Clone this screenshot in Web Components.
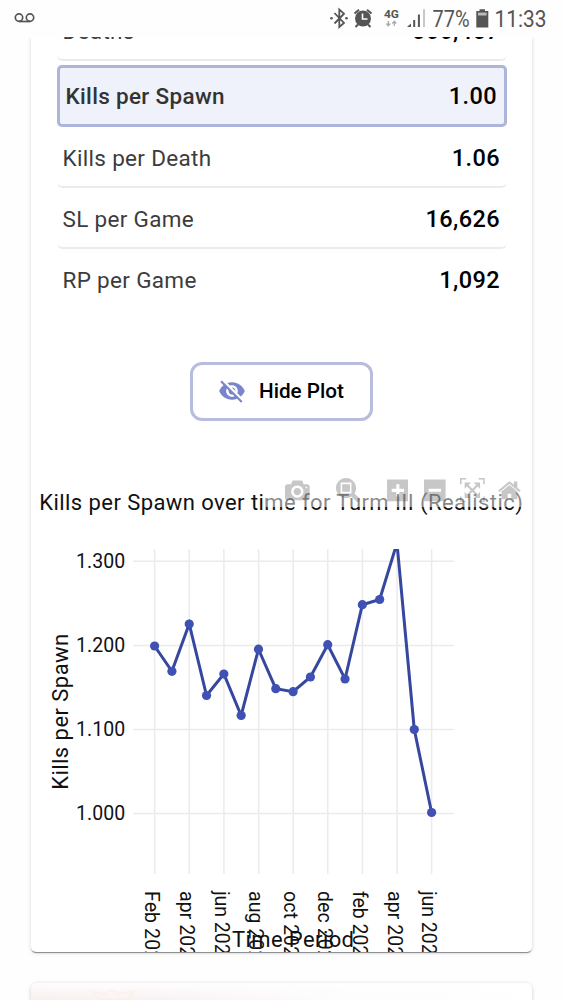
<!DOCTYPE html>
<html lang="en"><head><meta charset="utf-8"><title>Turm III statistics</title>
<style>
body{margin:0;width:562px;height:1000px;overflow:hidden;background:#fefefe;font-family:Roboto,"Liberation Sans",sans-serif}
</style></head><body>
<stats-app></stats-app>
<script>
const define=(name,html,init)=>customElements.define(name,class extends HTMLElement{
  constructor(){super();this.attachShadow({mode:'open'}).innerHTML=html;}
  connectedCallback(){if(init)init(this,this.shadowRoot);}
});

define('status-bar',`<style>:host{display:block;height:37px;background:#fefefe;position:relative;z-index:2}svg{display:block}text{font-family:Roboto,sans-serif;fill:#555}</style>
<svg width="562" height="37" viewBox="0 0 562 37">
<g fill="none" stroke="#555" stroke-width="1.7"><circle cx="19" cy="17.6" r="3.7"/><circle cx="30" cy="17.6" r="3.7"/><path d="M19 21.5H30"/></g>
<path d="M334.500 13L344 23L339.300 27V9.500L344 13.700L334.500 23.500" fill="none" stroke="#555" stroke-width="1.800"/>
<circle cx="331.500" cy="18.300" r="1.300" fill="#555"/><circle cx="346.500" cy="18.300" r="1.300" fill="#555"/>
<circle cx="363" cy="18.500" r="8" fill="#555"/>
<path d="M354.500 13.500L359 9.700M371.500 13.500L367 9.700M358 24.500L355.500 27M368 24.500L370.500 27" stroke="#555" stroke-width="2"/>
<path d="M362.500 13.500V19H367.500" fill="none" stroke="#fefefe" stroke-width="1.600"/>
<text x="384" y="18" font-size="11.500" font-weight="700" textLength="15" lengthAdjust="spacingAndGlyphs">4G</text>
<path d="M388.300 21V25M386.300 23.500L388.300 25.700L390.300 23.500M394.300 26V22M392.300 23.500L394.300 21.300L396.300 23.500" fill="none" stroke="#aaa" stroke-width="1.300"/>
<path d="M407 27L411 23.500V27Z" fill="#555"/><path d="M414.200 27V20M418.900 27V14.500" stroke="#555" stroke-width="2"/><path d="M424 27V9.300" stroke="#c8c8c8" stroke-width="2"/>
<text x="432.500" y="27" font-size="23" textLength="37" lengthAdjust="spacingAndGlyphs">77%</text>
<path d="M479.500 9.300H485V11H488.300V27.500H476.300V11H479.500Z" fill="#555"/><path d="M478 12.600H486.600V15.500H478Z" fill="#bbb"/>
<text x="494.500" y="27" font-size="23" textLength="52" lengthAdjust="spacingAndGlyphs">11:33</text>
</svg>`);

define('stat-row',`<style>
:host{display:flex;justify-content:space-between;align-items:center;box-sizing:border-box;height:61px;padding:3px 7px 0 6px;border-bottom:2px solid #ebebeb;border-radius:6px}
:host([last]){border-color:transparent}
:host([selected]){height:62px;margin:4px 0 0;border:3px solid #adb6da;border-radius:5px;background:#eff2fa;padding:0 7px 1px 6px}
.l{font-size:22.500px;letter-spacing:.32px;color:#3c3c3c}
:host([selected]) .l{font-weight:500;color:#333}
.v{font-size:23.500px;letter-spacing:.4px;font-weight:500;color:#000}
</style><span class="l"><slot></slot></span><span class="v"><slot name="value"></slot></span>`);

define('plot-button',`<style>
button{display:flex;align-items:center;box-sizing:border-box;width:183px;height:59px;padding:0 0 0 25px;gap:13px;background:#fff;border:3px solid #b6bddf;border-radius:12px;font:500 20.700px Roboto,sans-serif;color:#000}
:host{display:block}svg{display:block;flex:none}span{white-space:nowrap}
</style><button><svg width="28" height="28" viewBox="0 0 24 24" fill="#7985ca"><path d="M12 7c2.760 0 5 2.240 5 5 0 .65-.13 1.260-.36 1.830l2.920 2.920c1.510-1.260 2.700-2.890 3.430-4.750-1.730-4.390-6-7.500-11-7.500-1.400 0-2.740.25-3.980.7l2.160 2.160C10.740 7.130 11.350 7 12 7zM2 4.270l2.280 2.280.46.46C3.080 8.300 1.780 10.020 1 12c1.730 4.390 6 7.500 11 7.500 1.550 0 3.030-.3 4.380-.84l.42.42L19.730 22 21 20.730 3.270 3 2 4.270zM7.530 9.800l1.550 1.550c-.05.21-.08.43-.08.65 0 1.660 1.340 3 3 3 .22 0 .44-.03.65-.08l1.550 1.550c-.67.33-1.410.53-2.200.53-2.760 0-5-2.240-5-5 0-.79.2-1.530.53-2.200zm4.310-.78l3.150 3.150.02-.16c0-1.660-1.340-3-3-3l-.17.01z"/></svg><span><slot></slot></span></button>`);

const icons=[
[1000,0,'m500 450c-83 0-150-67-150-150 0-83 67-150 150-150 83 0 150 67 150 150 0 83-67 150-150 150z m400 150h-120c-16 0-34 13-39 29l-31 93c-6 15-23 28-40 28h-340c-16 0-34-13-39-28l-31-94c-6-15-23-28-40-28h-120c-55 0-100-45-100-100v-450c0-55 45-100 100-100h800c55 0 100 45 100 100v450c0 55-45 100-100 100z m-400-550c-138 0-250 112-250 250 0 138 112 250 250 250 138 0 250-112 250-250 0-138-112-250-250-250z m365 380c-19 0-35 16-35 35 0 19 16 35 35 35 19 0 35-16 35-35 0-19-16-35-35-35z'],
[1000,26,'m1000-25l-250 251c40 63 63 138 63 218 0 224-182 406-407 406-224 0-406-182-406-406s183-406 407-406c80 0 155 22 218 62l250-250 125 125z m-812 250l0 438 437 0 0-438-437 0z m62 375l313 0 0-312-313 0 0 312z'],
[875,26.2,'m1 787l0-875 875 0 0 875-875 0z m687-500l-187 0 0-187-125 0 0 187-188 0 0 125 188 0 0 187 125 0 0-187 187 0 0-125z'],
[875,16,'m0 788l0-876 875 0 0 876-875 0z m688-500l-500 0 0 125 500 0 0-125z'],
[1000,14.2,'m250 850l-187 0-63 0 0-62 0-188 63 0 0 188 187 0 0 62z m688 0l-188 0 0-62 188 0 0-188 62 0 0 188 0 62-62 0z m-875-938l0 188-63 0 0-188 0-62 63 0 187 0 0 62-187 0z m875 188l0-188-188 0 0-62 188 0 62 0 0 62 0 188-62 0z m-125 188l-1 0-93-94-156 156 156 156 92-93 2 0 0 250-250 0 0-2 93-92-156-156-156 156 94 92 0 2-250 0 0-250 0 0 93 93 157-156-157-156-93 94 0 0 0-250 250 0 0 0-94 93 156 157 156-157-93-93 0 0 250 0 0 250z'],
[928.6,13.8,'m786 296v-267q0-15-11-26t-25-10h-214v214h-143v-214h-214q-15 0-25 10t-11 26v267q0 1 0 2t0 2l321 264 321-264q1-1 1-4z m124 39l-34-41q-5-5-12-6h-2q-7 0-12 3l-386 322-386-322q-7-4-13-4-7 2-12 7l-35 41q-4 5-3 12t6 11l401 334q18 15 42 15t43-15l136-114v109q0 8 5 13t13 5h107q8 0 13-5t5-13v-227l122-102q5-5 6-12t-4-13z']];
define('plot-toolbar',`<style>:host{display:flex;box-sizing:border-box;width:262px;height:35px;padding:5.800px 0 0 19.500px;background:rgba(255,255,255,.5)}svg{display:block;flex:none;fill:rgba(68,68,68,.3)}</style>`,(el,root)=>{
  root.innerHTML+=icons.map(([w,m,d])=>`<svg style="margin-left:${m}px" width="${w*.0247}" height="24.7" viewBox="0 0 ${w} 1000"><path transform="matrix(1 0 0 -1 0 850)" d="${d}"/></svg>`).join('');
});

define('line-plot',`<style>
:host{display:block;position:relative;height:483px}
svg{display:block}text{font-family:Roboto,sans-serif;fill:#111}
plot-toolbar{position:absolute;left:234.500px;top:3px}
</style><svg width="500" height="483" viewBox="31 469 500 483"></svg><plot-toolbar></plot-toolbar>`,(el,root)=>{
  const xs=[154.6,189.3,223.9,258.6,293.2,327.8,362.4,397,431.6];
  const labels=['Feb 2020','apr 2020','jun 2020','aug 2020','oct 2020','dec 2020','feb 2021','apr 2021','jun 2021'];
  const ys=[646,671.3,624,695.5,674,715.5,649.2,688.7,691.7,677,644.7,679,604.7,599.5,543,729.5,812.5];
  const pts=ys.map((y,i)=>[154.6+i*17.3125,y]);
  let s='<clipPath id="area"><rect x="133" y="549" width="321" height="325"/></clipPath><g stroke="#ebebeb" stroke-width="1.500">';
  xs.forEach(x=>s+=`<path d="M${x} 549V874"/>`);
  [561.3,645.5,729.5,813.5].forEach(y=>s+=`<path d="M133 ${y}H454"/>`);
  s+=`</g><g clip-path="url(#area)"><polyline points="${pts.join(' ')}" fill="none" stroke="#36479f" stroke-width="3"/>`;
  pts.forEach(p=>s+=`<circle cx="${p[0]}" cy="${p[1]}" r="4.600" fill="#3f51b5"/>`);
  s+='</g>';
  ['1.300','1.200','1.100','1.000'].forEach((t,i)=>s+=`<text x="76" y="${568+i*84.1}" font-size="19.500" textLength="49.200">${t}</text>`);
  labels.forEach((t,i)=>s+=`<text transform="translate(${xs[i]-9.400} 891) rotate(90)" font-size="19.500" letter-spacing="${{F:.1,a:.05,o:.1,d:.1}[t[0]]||-.05}">${t}</text>`);
  s+=`<text x="39.300" y="510" font-size="22" textLength="483.500">Kills per Spawn over time for Turm III (Realistic)</text>
  <text transform="translate(68.300 789.800) rotate(-90)" font-size="22" textLength="156">Kills per Spawn</text>
  <text x="232" y="947" font-size="22" textLength="122">Time Period</text>`;
  root.querySelector('svg').innerHTML=s;
});

define('stats-card',`<style>:host{display:block;box-sizing:border-box;width:501px;height:915px;margin-left:31px;overflow:hidden;background:#fff;border-radius:0 0 5px 5px;box-shadow:0 2px 1px -1px rgba(0,0,0,.32),0 1px 1px rgba(0,0,0,.14),0 1px 4px rgba(0,0,0,.14)}
.rows{margin:-37px 25px 0 25.500px;height:310px}.btn{padding:51.500px 0 48.500px 159px}</style>
<div class="rows"><slot></slot></div><div class="btn"><slot name="button"></slot></div><slot name="plot"></slot>`);

define('image-card',`<style>:host{display:block;width:501px;height:60px;margin:31px 0 0 31px;border-radius:6px;overflow:hidden;background:linear-gradient(rgba(255,255,255,.95),rgba(255,255,255,.5) 17px,transparent),linear-gradient(90deg,#f1dede,#f5e5e3 16%,#f3e3e4 24%,#f8efef 42%,#fcf8f8 60%,#fefefe);box-shadow:0 1px 4px rgba(0,0,0,.2)}svg{display:block}</style>
<svg width="500" height="20"><path d="M60 8L73 11L79 7L87 11L104 8L96 17H68Z" fill="none" stroke="#f7e9cf" stroke-width="2" opacity=".25"/></svg>`);

define('stats-app',`<style>:host{display:flex;flex-direction:column;height:1000px;overflow:hidden}
status-bar,stats-card,image-card{flex:none}stat-row:first-child{margin-top:0}</style>
<status-bar></status-bar><stats-card>
<stat-row>Deaths<span slot="value">566,457</span></stat-row>
<stat-row selected>Kills per Spawn<span slot="value">1.00</span></stat-row>
<stat-row>Kills per Death<span slot="value">1.06</span></stat-row>
<stat-row>SL per Game<span slot="value">16,626</span></stat-row>
<stat-row last>RP per Game<span slot="value">1,092</span></stat-row>
<plot-button slot="button">Hide Plot</plot-button><line-plot slot="plot"></line-plot>
</stats-card><image-card></image-card>`);
</script></body></html>
